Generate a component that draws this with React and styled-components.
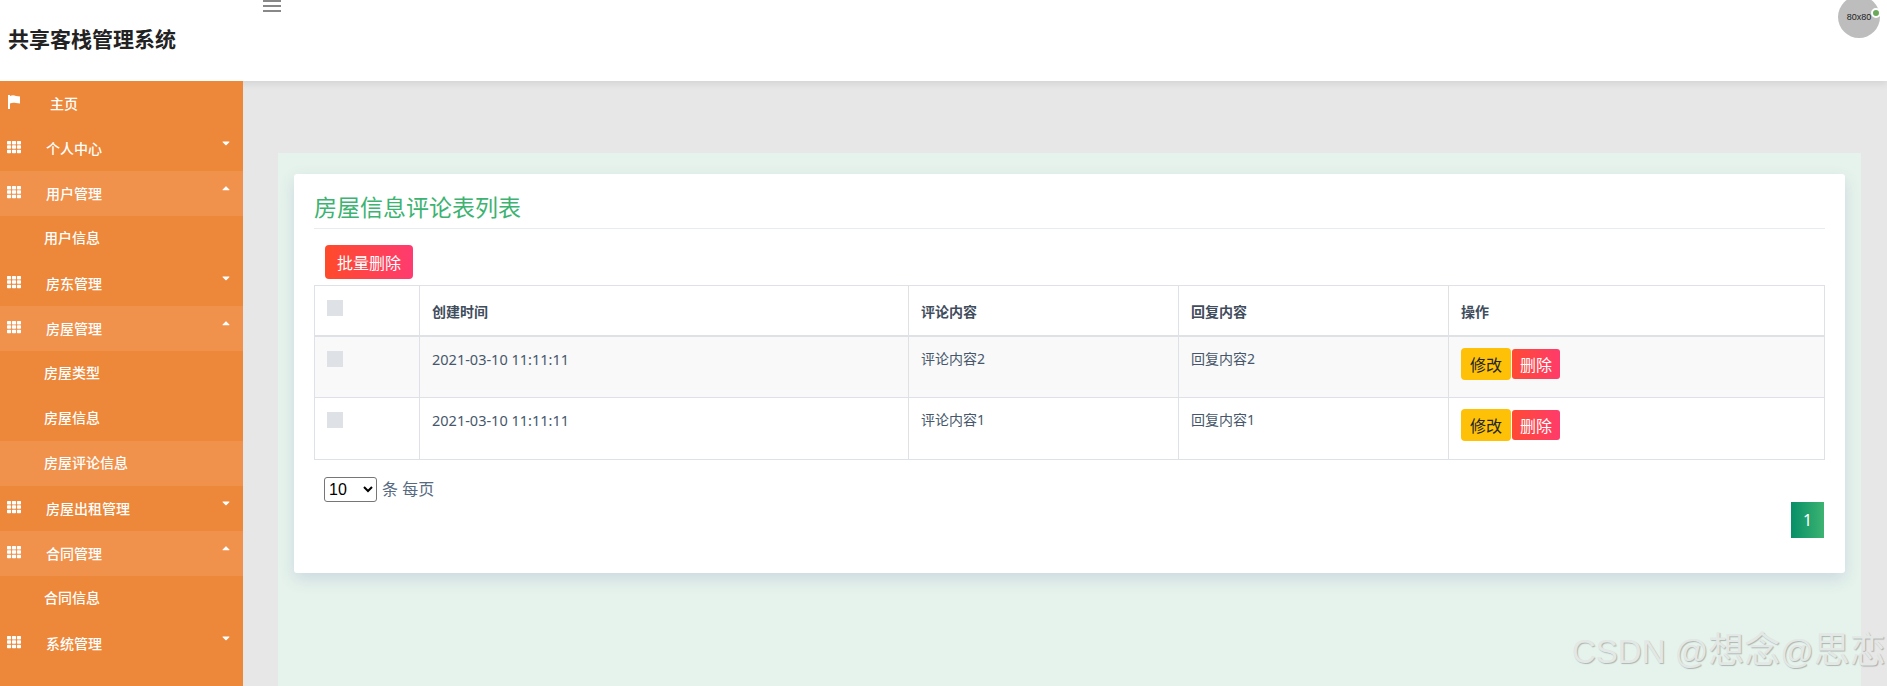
import React from 'react';
import styled, { createGlobalStyle } from 'styled-components';
import { FaCaretDown, FaCaretUp, FaTh } from 'react-icons/fa';

const FONT = '"Noto Sans", "Noto Sans CJK SC", sans-serif';

const GlobalStyle = createGlobalStyle`
  html, body {
    margin: 0;
    height: 100%;
    overflow: hidden;
    background: #e7e7e7;
    font-family: ${FONT};
  }
  * {
    box-sizing: border-box;
  }
`;

const Page = styled.div`
  position: relative;
  width: 1887px;
  height: 686px;
  overflow: hidden;
  display: flex;
  flex-direction: column;
`;

const Header = styled.header`
  position: relative;
  z-index: 2;
  flex: 0 0 81px;
  display: flex;
  background: #fff;
  box-shadow: 0 2px 8px rgba(0, 0, 0, 0.1);
`;

const Brand = styled.h1`
  width: 263px;
  margin: 0;
  padding: 24px 0 0 8px;
  font-size: 21px;
  line-height: 30px;
  font-weight: 700;
  color: #222;
`;

const MenuToggle = styled.svg`
  display: block;
  width: 18px;
  height: 12px;
  fill: #888;
`;

const Avatar = styled.div`
  position: absolute;
  left: 1838px;
  top: -4px;
  width: 42px;
  height: 42px;
  border-radius: 50%;
  background: #bdbdbd;
  color: #222;
  font-family: "Liberation Sans", sans-serif;
  font-size: 9px;
  display: flex;
  align-items: center;
  justify-content: center;
`;

const OnlineDot = styled.span`
  position: absolute;
  right: -1px;
  top: 12px;
  width: 10px;
  height: 10px;
  border-radius: 50%;
  background: #6aa95c;
  border: 2px solid #fff;
`;

const Body = styled.div`
  flex: 1;
  display: flex;
  min-height: 0;
`;

const Sidebar = styled.nav`
  position: relative;
  z-index: 3;
  flex: 0 0 243px;
  background: #ed8739;
  color: #fff;
`;

const MenuRow = styled.div`
  position: relative;
  height: 45px;
  display: flex;
  padding-left: ${p => p.$indent}px;
  padding-top: ${p => p.$sub ? 12 : 13}px;
  font-size: 14px;
  line-height: 20px;
  font-weight: 500;
  background: ${p => p.$active ? '#f0914c' : 'transparent'};
`;

const RowIcon = styled.span`
  position: absolute;
  left: 7px;
  top: 14px;
  svg {
    display: block;
  }
`;

const Caret = styled.span`
  position: absolute;
  left: 220px;
  top: 11px;
  svg {
    display: block;
  }
`;

const Main = styled.main`
  flex: 1;
  padding: 72px 26px 0 35px;
  min-width: 0;
`;

const Panel = styled.section`
  height: 100%;
  background: #e6f3ec;
  padding: 21px 16px 0;
`;

const Card = styled.div`
  height: 399px;
  background: #fff;
  border-radius: 3px;
  padding: 15px 20px 0;
  box-shadow: 0 6px 16px rgba(60, 80, 160, 0.16);
`;

const Title = styled.h2`
  margin: 0;
  height: 40px;
  font-size: 23px;
  line-height: 36px;
  font-weight: 400;
  color: #3cb371;
  border-bottom: 1px solid #e9ecef;
`;

const Toolbar = styled.div`
  padding: 16px 0 6px 11px;
  display: flex;
`;

const BatchButton = styled.button`
  width: 88px;
  height: 34px;
  padding: 0;
  border: 0;
  border-radius: 4px;
  font: 16px ${FONT};
  color: #fff;
  background: linear-gradient(90deg, #ff4a2a, #ff3b70);
`;

const Table = styled.table`
  width: 1510px;
  table-layout: fixed;
  border-collapse: collapse;
  color: #46576b;
  font-size: 14px;
  line-height: 20px;
`;

const Th = styled.th`
  height: 50px;
  padding: 16px 12px 0;
  border: 1px solid #dee2e6;
  border-bottom-width: 2px;
  text-align: left;
  vertical-align: top;
  font-weight: 700;
  font-size: 14px;
  color: #3f4d5c;
`;

const Td = styled.td`
  height: 62px;
  padding: 12px 12px 0;
  border: 1px solid #dee2e6;
  vertical-align: top;
`;

const TimeCell = styled(Td)`
  font-size: 14.5px;
`;

const Tr = styled.tr`
  background: ${p => p.$striped ? '#f9f9f9' : '#fff'};
`;

const Check = styled.span`
  display: block;
  width: 16px;
  height: 16px;
  background: #dee2e6;
  margin-top: ${p => p.$head ? -2 : 2}px;
`;

const Actions = styled.div`
  display: flex;
  align-items: center;
  gap: 1px;
  margin-top: -1px;
`;

const EditButton = styled.button`
  width: 50px;
  height: 32px;
  padding: 0;
  border: 0;
  border-radius: 4px;
  font: 16px ${FONT};
  color: #212529;
  background: #ffc107;
`;

const DeleteButton = styled.button`
  width: 48px;
  height: 30px;
  padding: 0;
  border: 0;
  border-radius: 3px;
  font: 16px ${FONT};
  color: #fff;
  background: linear-gradient(90deg, #ff4a33, #ff3b6b);
`;

const PageSize = styled.div`
  display: flex;
  align-items: center;
  gap: 5px;
  margin: 17px 0 0 10px;
  color: #566a7f;
  font-size: 16px;
  line-height: 25px;
`;

const SizeSelect = styled.select`
  width: 53px;
  height: 25px;
  font: 16px "Liberation Sans", sans-serif;
  color: #000;
  background: #fff;
  border: 1px solid #767676;
  border-radius: 3px;
`;

const Pager = styled.div`
  display: flex;
  justify-content: flex-end;
  margin: 0 1px 0 0;
`;

const PageNumber = styled.span`
  width: 33px;
  height: 36px;
  display: flex;
  align-items: center;
  justify-content: center;
  color: #fff;
  font-size: 16px;
  background: linear-gradient(90deg, #078f68, #3cb371);
`;

const Watermark = styled.div`
  position: absolute;
  left: 1572px;
  top: 631px;
  white-space: nowrap;
  font-family: "Liberation Sans", "Noto Sans CJK SC", sans-serif;
  font-size: 33px;
  line-height: 40px;
  color: #e3e7e5;
  text-shadow: 1px 1px 1px rgba(0, 0, 0, 0.25);
  z-index: 3;
`;

const WatermarkCjk = styled.span`
  font-size: 36px;
`;

const FlagIcon = () => (
  <svg width="14" height="14" viewBox="0 0 14 14" fill="currentColor" style={{ display: 'block' }}>
    <path d="M1 0h2v14H1z" />
    <path d="M3 1c2-1 4-1 6 0l4 .5v7L9 8C7 7.5 5 7.5 3 8.5z" />
  </svg>
);

const MENU = [
  { label: '主页', icon: 'flag', indent: 50 },
  { label: '个人中心', caret: 'down' },
  { label: '用户管理', caret: 'up', active: true },
  { label: '用户信息', sub: true },
  { label: '房东管理', caret: 'down' },
  { label: '房屋管理', caret: 'up', active: true },
  { label: '房屋类型', sub: true },
  { label: '房屋信息', sub: true },
  { label: '房屋评论信息', sub: true, active: true },
  { label: '房屋出租管理', caret: 'down' },
  { label: '合同管理', caret: 'up', active: true },
  { label: '合同信息', sub: true },
  { label: '系统管理', caret: 'down' },
];

const ROWS = [
  { time: '2021-03-10 11:11:11', comment: '评论内容2', reply: '回复内容2' },
  { time: '2021-03-10 11:11:11', comment: '评论内容1', reply: '回复内容1' },
];

const COLS = [105, 489, 270, 270, 376];

export default function App() {
  return (
    <Page>
      <GlobalStyle />
      <Header>
        <Brand>共享客栈管理系统</Brand>
        <MenuToggle viewBox="0 0 18 12">
          <rect y="0" width="18" height="2" />
          <rect y="5" width="18" height="2" />
          <rect y="10" width="18" height="2" />
        </MenuToggle>
        <Avatar>
          80x80
          <OnlineDot />
        </Avatar>
      </Header>
      <Body>
        <Sidebar>
          {MENU.map(item => (
            <MenuRow
              key={item.label}
              $active={item.active}
              $sub={item.sub}
              $indent={item.indent || (item.sub ? 44 : 46)}
            >
              {!item.sub && (
                <RowIcon>
                  {item.icon === 'flag' ? <FlagIcon /> : <FaTh size={14} />}
                </RowIcon>
              )}
              {item.label}
              {item.caret && (
                <Caret>
                  {item.caret === 'up' ? <FaCaretUp size={12} /> : <FaCaretDown size={12} />}
                </Caret>
              )}
            </MenuRow>
          ))}
        </Sidebar>
        <Main>
          <Panel>
            <Card>
              <Title>房屋信息评论表列表</Title>
              <Toolbar>
                <BatchButton>批量删除</BatchButton>
              </Toolbar>
              <Table>
                <colgroup>
                  {COLS.map((w, i) => <col key={i} width={w} />)}
                </colgroup>
                <thead>
                  <tr>
                    <Th><Check $head /></Th>
                    <Th>创建时间</Th>
                    <Th>评论内容</Th>
                    <Th>回复内容</Th>
                    <Th>操作</Th>
                  </tr>
                </thead>
                <tbody>
                  {ROWS.map((row, i) => (
                    <Tr key={row.comment} $striped={i === 0}>
                      <Td><Check /></Td>
                      <TimeCell>{row.time}</TimeCell>
                      <Td>{row.comment}</Td>
                      <Td>{row.reply}</Td>
                      <Td>
                        <Actions>
                          <EditButton>修改</EditButton>
                          <DeleteButton>删除</DeleteButton>
                        </Actions>
                      </Td>
                    </Tr>
                  ))}
                </tbody>
              </Table>
              <PageSize>
                <SizeSelect defaultValue="10">
                  <option value="10">10</option>
                  <option value="20">20</option>
                </SizeSelect>
                条 每页
              </PageSize>
              <Pager>
                <PageNumber>1</PageNumber>
              </Pager>
            </Card>
          </Panel>
        </Main>
      </Body>
      <Watermark>CSDN @<WatermarkCjk>想念</WatermarkCjk>@<WatermarkCjk>思恋</WatermarkCjk></Watermark>
    </Page>
  );
}
